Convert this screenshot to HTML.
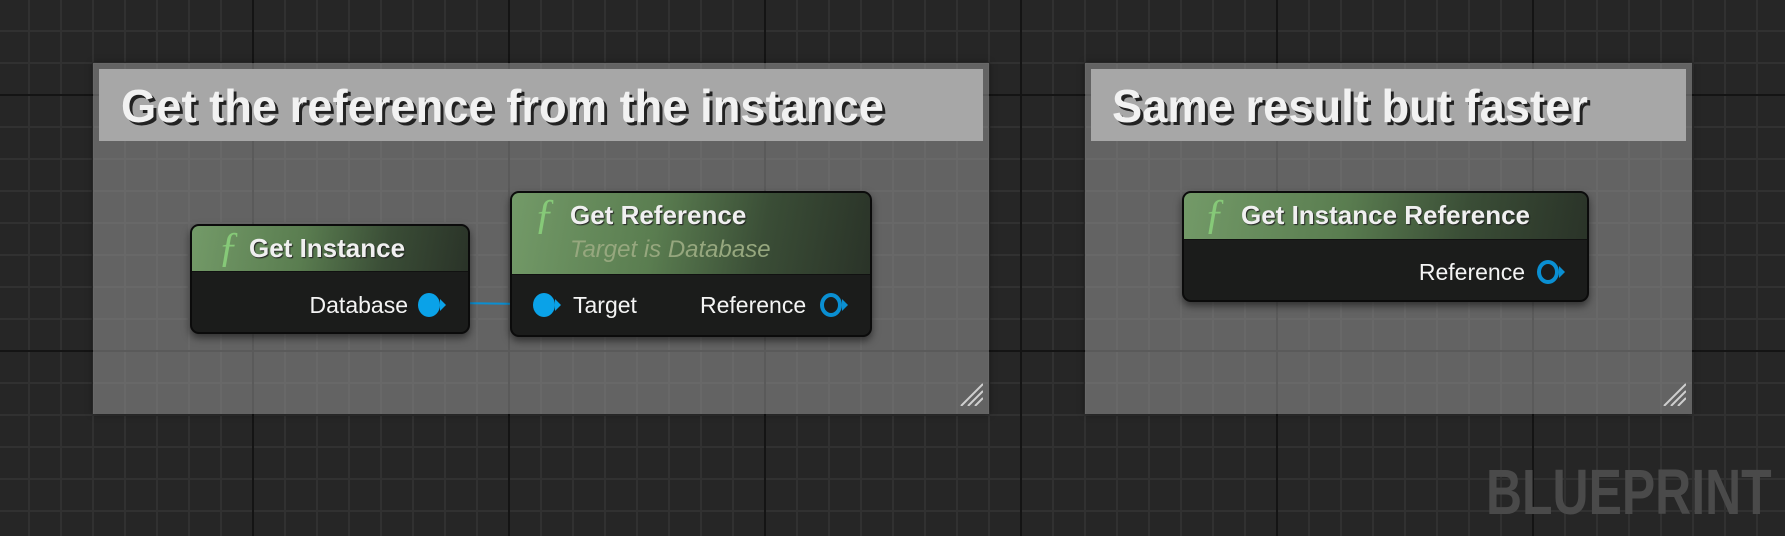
<!DOCTYPE html>
<html><head><style>
*{margin:0;padding:0;box-sizing:border-box}
body{width:1785px;height:536px;overflow:hidden;position:relative;font-family:"Liberation Sans",sans-serif;
background-color:#262626;
background-image:
linear-gradient(to right,#141414 0,#141414 2px,transparent 2px),
linear-gradient(to bottom,#141414 0,#141414 2px,transparent 2px),
linear-gradient(to right,#313131 0,#313131 2px,transparent 2px),
linear-gradient(to bottom,#313131 0,#313131 2px,transparent 2px);
background-size:256px 256px,256px 256px,32px 32px,32px 32px;
background-position:252px 94px,252px 94px,28px 30px,28px 30px;}
.cm{position:absolute;top:63px;height:351px;background:rgba(160,160,160,0.5);box-shadow:0 0 6px rgba(0,0,0,.5)}
.cm .hd{position:absolute;left:6px;right:6px;top:6px;height:72px;background:#a7a7a7}
.cm .t{position:absolute;top:16px;font-weight:bold;font-size:46px;color:#f2f2f2;text-shadow:3px 3px 0 #222;white-space:nowrap;transform:scaleX(0.985);transform-origin:left}
.rz{position:absolute;right:6px;bottom:8px;width:24px;height:24px}
.nd{position:absolute;background:#1b1c1b;border:2px solid #0b0b0b;border-radius:9px;box-shadow:0 4px 8px rgba(0,0,0,.5);overflow:hidden}
.nd .nh{position:absolute;left:0;right:0;top:0;background:linear-gradient(100deg,#739a68 0%,#5a7d50 40%,#3a4d36 70%,#2a3328 100%);border-bottom:1px solid #111}
.nt{position:absolute;font-weight:bold;font-size:26px;color:#f0f0f0;white-space:nowrap;text-shadow:1px 1px 1px #222}
.fi{position:absolute;font-family:"Liberation Serif",serif;font-style:italic;font-size:42px;color:#86c978}
.lb{position:absolute;font-size:23px;color:#f4f4f4;white-space:nowrap}
.pin{position:absolute;width:22px;height:24px;border-radius:50%;background:#0aa2e8}
.ring{position:absolute;width:22px;height:24px;border-radius:50%;border:4px solid #0a8fd2}
.arr{position:absolute;width:0;height:0;border-top:6px solid transparent;border-bottom:6px solid transparent;border-left:6px solid #0aa2e8}
</style></head><body>

<div class="cm" style="left:93px;width:896px">
 <div class="hd"></div>
 <div class="t" style="left:28px">Get the reference from the instance</div>
 <svg class="rz" viewBox="0 0 24 24"><path d="M2 24L24 2M9 24L24 9M16 24L24 16" stroke="#cfcfcf" stroke-width="2"/></svg>
</div>
<div class="cm" style="left:1085px;width:607px">
 <div class="hd"></div>
 <div class="t" style="left:27px">Same result but faster</div>
 <svg class="rz" viewBox="0 0 24 24"><path d="M2 24L24 2M9 24L24 9M16 24L24 16" stroke="#cfcfcf" stroke-width="2"/></svg>
</div>

<svg style="position:absolute;left:0;top:0" width="1785" height="536"><path d="M446 303 C480 303 500 304 533 304" stroke="#0a8fd2" stroke-width="2" fill="none"/></svg>

<div class="nd" style="left:190px;top:224px;width:280px;height:110px">
 <div class="nh" style="height:46px"></div>
 <div class="fi" style="left:26px;top:-2px">ƒ</div>
 <div class="nt" style="left:57px;top:7px">Get Instance</div>
 <div class="lb" style="right:60px;top:66px">Database</div>
 <div class="pin" style="left:226px;top:67px"></div>
 <div class="arr" style="left:248px;top:73px"></div>
</div>

<div class="nd" style="left:510px;top:191px;width:362px;height:146px">
 <div class="nh" style="height:82px"></div>
 <div class="fi" style="left:22px;top:-2px">ƒ</div>
 <div class="nt" style="left:58px;top:7px">Get Reference</div>
 <div class="lb" style="left:58px;top:43px;font-style:italic;font-size:24px;color:#96a77e">Target is Database</div>
 <div class="pin" style="left:21px;top:100px"></div>
 <div class="arr" style="left:43px;top:106px"></div>
 <div class="lb" style="left:61px;top:99px">Target</div>
 <div class="lb" style="left:188px;top:99px">Reference</div>
 <div class="ring" style="left:308px;top:100px"></div>
 <div class="arr" style="left:330px;top:106px;border-left-color:#0a8fd2"></div>
</div>

<div class="nd" style="left:1182px;top:191px;width:407px;height:111px">
 <div class="nh" style="height:47px"></div>
 <div class="fi" style="left:20px;top:-2px">ƒ</div>
 <div class="nt" style="left:57px;top:7px">Get Instance Reference</div>
 <div class="lb" style="right:62px;top:66px">Reference</div>
 <div class="ring" style="left:353px;top:67px"></div>
 <div class="arr" style="left:375px;top:73px;border-left-color:#0a8fd2"></div>
</div>

<div style="position:absolute;left:1486px;top:455px;font-weight:bold;font-size:64px;color:#4a4a4a;white-space:nowrap;transform:scaleX(0.78);transform-origin:left">BLUEPRINT</div>
</body></html>
